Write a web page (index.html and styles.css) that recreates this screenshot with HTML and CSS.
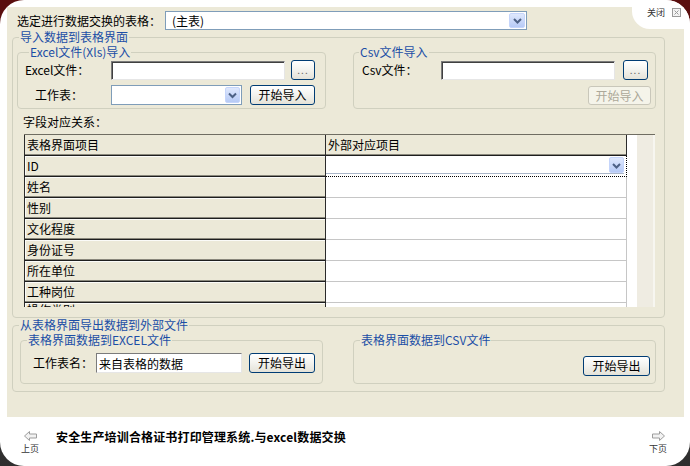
FILE: index.html
```html
<!DOCTYPE html>
<html lang="zh-CN">
<head>
<meta charset="utf-8">
<title>与excel数据交换</title>
<link rel="stylesheet" href="styles.css">
</head>
<body>
<div class="frame">
  <div class="close-tab">
    <span class="close-text">关闭</span>
    <svg class="close-icon" width="9" height="9" viewBox="0 0 9 9"><rect x="0.5" y="0.5" width="8" height="8" fill="#f4f4f4" stroke="#9a9a9a"/><path d="M2.5 2.5 L6.5 6.5 M6.5 2.5 L2.5 6.5" stroke="#9a9a9a" stroke-width="1"/></svg>
  </div>

  <div class="panel">
    <div class="toprow">
      <span class="toplabel">选定进行数据交换的表格：</span>
      <div class="combo combo-main">
        <span class="combo-text">(主表)</span>
        <span class="combo-btn"><svg width="13" height="15" viewBox="0 0 13 15"><polyline points="3,6 6.5,9.5 10,6" fill="none" stroke="#4d6185" stroke-width="2"/></svg></span>
      </div>
    </div>

    <fieldset class="group outer import">
      <legend class="lg-outer">导入数据到表格界面</legend>
      <div class="pair pair-import">
        <fieldset class="group inner in-excel">
          <legend class="lg-in-excel">Excel文件(Xls)导入</legend>
          <div class="frow row-first pl-excel">
            <span class="flabel w86">Excel文件：</span>
            <input class="tb tb-file" type="text" value="">
            <button class="btn btn-dots gap6">...</button>
          </div>
          <div class="frow row-second pl-excel">
            <span class="flabel w86 indent">工作表：</span>
            <div class="combo combo-sheet">
              <span class="combo-text"></span>
              <span class="combo-btn"><svg width="13" height="16" viewBox="0 0 13 16"><polyline points="3,6.5 6.5,10 10,6.5" fill="none" stroke="#4d6185" stroke-width="2"/></svg></span>
            </div>
            <button class="btn btn-go gap8">开始导入</button>
          </div>
        </fieldset>
        <fieldset class="group inner in-csv">
          <legend class="lg-in-csv">Csv文件导入</legend>
          <div class="frow row-first pl-csv">
            <span class="flabel w79">Csv文件：</span>
            <input class="tb tb-file" type="text" value="">
            <button class="btn btn-dots btn-dots-csv gap8">...</button>
          </div>
          <div class="frow row-second row-end">
            <button class="btn btn-disabled" disabled>开始导入</button>
          </div>
        </fieldset>
      </div>

      <div class="maplabel">字段对应关系：</div>
      <div class="grid">
        <div class="cols">
          <div class="grow head"><div class="c1">表格界面项目</div><div class="c2">外部对应项目</div></div>
          <div class="grow current"><div class="c1">ID</div><div class="c2">
            <div class="cell-combo"><span class="combo-btn"><svg width="13" height="15" viewBox="0 0 13 15"><polyline points="3,6 6.5,9.5 10,6" fill="none" stroke="#4d6185" stroke-width="2"/></svg></span></div>
          </div></div>
          <div class="grow"><div class="c1">姓名</div><div class="c2"></div></div>
          <div class="grow"><div class="c1">性别</div><div class="c2"></div></div>
          <div class="grow"><div class="c1">文化程度</div><div class="c2"></div></div>
          <div class="grow"><div class="c1">身份证号</div><div class="c2"></div></div>
          <div class="grow"><div class="c1">所在单位</div><div class="c2"></div></div>
          <div class="grow"><div class="c1">工种岗位</div><div class="c2"></div></div>
          <div class="grow partial"><div class="c1">操作类别</div><div class="c2"></div></div>
        </div>
        <div class="strip"></div>
        <div class="vbar"></div>
      </div>
    </fieldset>

    <fieldset class="group outer export">
      <legend class="lg-outer">从表格界面导出数据到外部文件</legend>
      <div class="pair pair-export">
        <fieldset class="group inner ex-excel">
          <legend class="lg-ex">表格界面数据到EXCEL文件</legend>
          <div class="frow pl-ex">
            <span class="flabel w63">工作表名：</span>
            <input class="tb tb-sheet" type="text" value="来自表格的数据">
            <button class="btn btn-out gap7">开始导出</button>
          </div>
        </fieldset>
        <fieldset class="group inner ex-csv">
          <legend class="lg-ex">表格界面数据到CSV文件</legend>
          <div class="frow row-end csv-out-row">
            <button class="btn btn-out">开始导出</button>
          </div>
        </fieldset>
      </div>
    </fieldset>
  </div>

  <div class="footer">
    <div class="nav">
      <svg width="13" height="10" viewBox="0 0 13 10"><polygon points="0.5,5 5.5,0.5 5.5,3 12.5,3 12.5,7 5.5,7 5.5,9.5" fill="#f2f2f2" stroke="#9d9d9d"/></svg>
      <span class="nav-text">上页</span>
    </div>
    <div class="title">安全生产培训合格证书打印管理系统.与excel数据交换</div>
    <div class="nav nav-right">
      <svg width="13" height="10" viewBox="0 0 13 10"><polygon points="12.5,5 7.5,0.5 7.5,3 0.5,3 0.5,7 7.5,7 7.5,9.5" fill="#f2f2f2" stroke="#9d9d9d"/></svg>
      <span class="nav-text">下页</span>
    </div>
  </div>
</div>
</body>
</html>
```

FILE: styles.css
```css
* { box-sizing: border-box; }

html, body {
  margin: 0;
  padding: 0;
}

body {
  width: 690px;
  height: 466px;
  overflow: hidden;
  background: linear-gradient(to bottom, #5a0e0e 0px, #5a0e0e 60px, #3e3a3a 380px, #2e2e2e 466px);
  font-family: "Noto Sans CJK SC", "Liberation Sans", sans-serif;
  font-size: 12px;
  color: #000;
}

.frame {
  position: relative;
  width: 690px;
  height: 466px;
  background: #fff;
  border-radius: 24px;
  overflow: hidden;
  display: flex;
  flex-direction: column;
}

/* close tab (overlay) */
.close-tab {
  position: absolute;
  top: 0;
  right: 0;
  width: 58px;
  height: 29px;
  background: #fff;
  border-bottom-left-radius: 18px;
  display: flex;
  align-items: flex-start;
  padding: 7px 0 0 15px;
}
.close-text {
  font-size: 9px;
  line-height: 11px;
  color: #333;
}
.close-icon {
  margin: 1px 0 0 7px;
}

/* main beige panel */
.panel {
  flex: none;
  margin: 7px 6px 0 7px;
  height: 410px;
  background: #ECE9D8;
}

.toprow {
  display: flex;
  align-items: center;
  height: 23px;
  padding: 4px 0 0 10px;
}
.toplabel {
  width: 148px;
  line-height: 19px;
}

/* combo boxes */
.combo {
  display: flex;
  align-items: center;
  background: #fff;
  border: 1px solid #7f9db9;
  padding: 1px;
}
.combo-main {
  width: 362px;
  height: 19px;
}
.combo-sheet {
  width: 131px;
  height: 20px;
}
.combo-text {
  flex: 1;
  padding-left: 5px;
  line-height: 15px;
}
.combo-btn {
  display: flex;
  align-items: center;
  justify-content: center;
  width: 15px;
  height: 100%;
  background: linear-gradient(#dfe8fd, #b6caf6);
  border: 1px solid #c5d5fb;
  border-radius: 2px;
}
.combo-main .combo-btn { width: 16px; }

/* group boxes */
.group {
  margin: 0;
  padding: 0;
  min-width: 0;
  border: 1px solid #d0d0bf;
  border-radius: 4px;
}
legend {
  padding: 0 1px 2px;
  line-height: 13px;
  color: #1b4ea6;
}
.lg-outer { margin-left: 6px; }
.lg-in-excel { margin-left: 11px; }
.lg-in-csv { margin-left: 5px; }
.lg-ex { margin-left: 6px; }

.outer {
  margin-left: 5px;
  width: 653px;
}
.import { padding-bottom: 10px; }

.pair {
  display: flex;
  justify-content: space-between;
  margin-right: 8px;
}
.pair-import { margin-left: 4px; }
.pair-export { margin-left: 7px; margin-bottom: 7px; }

.in-excel { width: 309px; padding-bottom: 3px; }
.in-csv { width: 303px; padding-bottom: 3px; }
.ex-excel { width: 303px; padding-bottom: 10px; }
.ex-csv { width: 303px; }

.frow {
  display: flex;
  align-items: center;
  height: 20px;
}
.row-second { margin-top: 5px; }
.row-end { justify-content: flex-end; padding-right: 4px; }
.pl-excel { padding-left: 7px; }
.pl-csv { padding-left: 8px; }
.pl-ex { padding-left: 12px; margin-top: 5px; }
.csv-out-row { margin-top: 8px; padding-right: 5px; }

.flabel { flex: none; line-height: 20px; white-space: nowrap; }
.w86 { width: 86px; }
.w79 { width: 79px; }
.w63 { width: 63px; }
.indent { padding-left: 10px; }

/* text boxes */
.tb {
  flex: none;
  height: 19px;
  margin: 0;
  padding: 0 2px;
  border-style: solid;
  border-width: 1px;
  border-color: #7b7b7b #e6e6e6 #e6e6e6 #7b7b7b;
  box-shadow: inset 1px 1px 0 #404040;
  background: #fff;
  font: inherit;
  color: #000;
  outline: none;
}
.tb-file { width: 174px; }
.tb-sheet {
  width: 146px;
  height: 20px;
  box-shadow: none;
  padding-left: 2px;
}

/* buttons */
.btn {
  flex: none;
  height: 20px;
  margin: 0;
  padding: 0;
  border: 1px solid #003c74;
  border-radius: 3px;
  background: linear-gradient(#ffffff, #f4f4f0 45%, #e4e2d8);
  font: inherit;
  line-height: 18px;
  color: #000;
}
.btn-dots {
  width: 24px;
  font-size: 10px;
  color: #666;
  letter-spacing: 1px;
}
.btn-dots-csv { width: 25px; margin-right: 3px; }
.btn-go { width: 65px; }
.btn-out { width: 66px; }
.csv-out-row .btn-out { width: 67px; }
.btn-disabled {
  width: 63px;
  height: 19px;
  border-color: #c9c7ba;
  background: #f5f4ea;
  color: #aca899;
}
.gap6 { margin-left: 6px; }
.gap7 { margin-left: 7px; }
.gap8 { margin-left: 8px; }

/* mapping grid */
.maplabel {
  margin: 6px 0 5px 10px;
  line-height: 14px;
}
.grid {
  display: flex;
  margin-left: 11px;
  width: 631px;
  height: 173px;
  border-top: 1px solid #6f6d62;
  overflow: hidden;
}
.cols {
  flex: none;
  width: 603px;
  background: #fff;
}
.grow {
  display: flex;
  height: 21px;
}
.grow.partial {
  height: 4px;
  overflow: hidden;
}
.c1 {
  flex: none;
  width: 302px;
  padding-left: 2px;
  line-height: 19px;
  background: #ECE9D8;
  border-left: 1px solid #2b2b2b;
  border-right: 1px solid #2b2b2b;
  border-bottom: 1px solid #1e1e1e;
  box-shadow: inset 0 -1px 0 #8a887c, inset 1px 1px 0 #fbfbf8;
}
.partial .c1 {
  border-bottom: none;
  box-shadow: inset 1px 1px 0 #fbfbf8;
  line-height: 8px;
  padding-top: 3px;
}
.c2 {
  flex: none;
  width: 301px;
  background: #fff;
  border-right: 1px solid #c6c6c6;
  border-bottom: 1px solid #c6c6c6;
}
.partial .c2 { border-bottom: none; }
.head .c1 { box-shadow: inset 0 -1px 0 #8a887c; }
.head .c2 {
  background: #ECE9D8;
  padding-left: 2px;
  line-height: 19px;
  border-right: 1px solid #2b2b2b;
  border-bottom: 1px solid #1e1e1e;
  box-shadow: inset 0 -1px 0 #8a887c;
}
.current .c2 {
  border-right: 1px dotted #000;
  border-bottom: 1px dotted #000;
  padding: 1px 2px 2px 0;
}
.cell-combo {
  display: flex;
  justify-content: flex-end;
  height: 17px;
  border-bottom: 1px solid #aab6c8;
  background: #fff;
}
.cell-combo .combo-btn { height: 16px; }

.strip {
  flex: none;
  width: 10px;
  background: #fff;
}
.vbar {
  flex: none;
  width: 18px;
  background: #efece2;
  border-right: 2px solid #f7f6f0;
}

/* footer */
.footer {
  flex: 1;
  display: flex;
  align-items: flex-start;
  padding: 13px 24px 0 21px;
}
.nav {
  display: flex;
  flex-direction: column;
  align-items: center;
  width: 18px;
}
.nav svg { margin-top: 1px; }
.nav-text {
  margin-top: 3px;
  font-size: 9px;
  line-height: 10px;
  color: #333;
  white-space: nowrap;
}
.nav-right {
  margin-left: auto;
  width: 16px;
}
.title {
  margin-left: 17px;
  font-weight: bold;
  line-height: 14px;
  letter-spacing: 0.15px;
  white-space: nowrap;
}
```
